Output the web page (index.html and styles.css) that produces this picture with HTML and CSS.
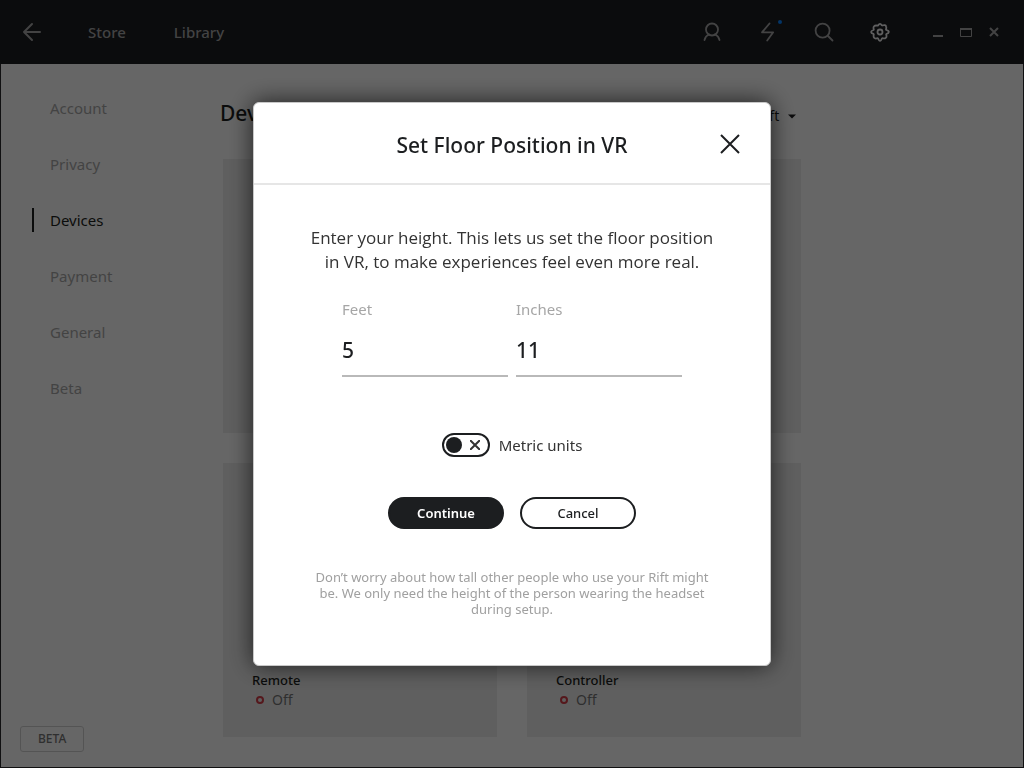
FILE: index.html
```html
<!DOCTYPE html>
<html lang="en">
<head>
<meta charset="utf-8">
<title>Devices</title>
<link rel="stylesheet" href="styles.css">
</head>
<body>
<div class="window">
  <header class="topbar">
    <button class="icon-button" aria-label="Back">
      <svg width="20" height="20" viewBox="0 0 20 20"><path d="M18 10H2M10 2L2 10l8 8"/></svg>
    </button>
    <nav class="topnav">
      <a href="#">Store</a>
      <a href="#">Library</a>
    </nav>
    <div class="tools">
      <button class="icon-button" aria-label="Profile">
        <svg width="20" height="20" viewBox="0 0 20 20"><circle cx="10" cy="7.500" r="6"/><path d="M2.500 18c.6-2.500 2-4.500 4.500-5.500M17.500 18c-.6-2.500-2-4.500-4.500-5.500"/></svg>
      </button>
      <button class="icon-button" aria-label="Activity">
        <svg width="20" height="20" viewBox="0 0 20 20"><path d="M11.500 1.500L4 10.300h11.200L9.200 18.500"/></svg>
        <span class="dot"></span>
      </button>
      <button class="icon-button" aria-label="Search">
        <svg width="20" height="20" viewBox="0 0 20 20"><circle cx="8.600" cy="8.600" r="7"/><path d="M14 14l4.500 4.500"/></svg>
      </button>
      <button class="icon-button active" aria-label="Settings">
        <svg width="20" height="20" viewBox="0 0 20 20"><path d="M8.200 3.300Q10 .3 11.800 3.300L12.200 3.500Q15.500 2.500 16 4.300Q16.600 5.200 16 7.600L16.400 8Q19.200 9 18.700 10Q19 11 16.400 12L16.200 12.400Q17 15 15.800 15.800Q14.800 16.800 12.400 16.200L11.900 16.500Q11 19 10 18.800Q9 19 8.100 16.500L7.600 16.200Q5 17 4.200 15.800Q3.200 14.900 3.800 12.400L3.500 11.900Q1 11 1.200 10Q1 9 3.500 8L3.800 7.500Q3 5 4.200 4.200Q5.200 3.100 7.700 3.700Z"/><circle cx="10" cy="10" r="2.500"/></svg>
      </button>
    </div>
    <div class="window-controls">
      <button aria-label="Minimize"><svg width="12" height="12" viewBox="0 0 12 12"><path d="M1 10h10"/></svg></button>
      <button aria-label="Maximize"><svg width="12" height="12" viewBox="0 0 12 12"><path d="M0 3h12"/><path d="M.5 2v8.500h11V2" stroke-width="1"/></svg></button>
      <button aria-label="Close window"><svg width="12" height="12" viewBox="0 0 12 12"><path d="M2 2l8 8M10 2l-8 8"/></svg></button>
    </div>
  </header>
  <div class="body">
    <aside class="sidebar">
      <nav>
        <a href="#">Account</a>
        <a href="#">Privacy</a>
        <a href="#" class="current" aria-current="page">Devices</a>
        <a href="#">Payment</a>
        <a href="#">General</a>
        <a href="#">Beta</a>
      </nav>
      <span class="beta">BETA</span>
    </aside>
    <main class="main">
      <div class="main-head">
        <h1>Devices</h1>
        <label class="picker">
          <select aria-label="Headset"><option>Rift</option></select>
          <svg width="8" height="5" viewBox="0 0 8 5"><path d="M0 .5h8L4 4.500z"/></svg>
        </label>
      </div>
      <div class="cards">
        <section class="card"></section>
        <section class="card"></section>
        <section class="card"><h2>Remote</h2><p><i></i>Off</p></section>
        <section class="card"><h2>Controller</h2><p><i></i>Off</p></section>
      </div>
    </main>
  </div>
</div>

<div class="overlay">
  <form class="modal" role="dialog" aria-labelledby="modal-title">
    <header class="modal-head">
      <h2 id="modal-title">Set Floor Position in VR</h2>
      <button type="button" class="close" aria-label="Close">
        <svg width="20" height="20" viewBox="0 0 20 20"><path d="M1 1l18 18M19 1L1 19"/></svg>
      </button>
    </header>
    <div class="modal-body">
      <p class="intro">Enter your height. This lets us set the floor position<br>in VR, to make experiences feel even more real.</p>
      <div class="fields">
        <div class="field"><label for="feet">Feet</label><input id="feet" type="text" inputmode="numeric" value="5"></div>
        <div class="field"><label for="inches">Inches</label><input id="inches" type="text" inputmode="numeric" value="11"></div>
      </div>
      <label class="metric">
        <span class="switch">
          <input type="checkbox" role="switch">
          <svg width="10" height="10" viewBox="0 0 10 10"><path d="M0 0l10 10M10 0L0 10"/></svg>
        </span>
        <span>Metric units</span>
      </label>
      <div class="actions">
        <button type="button" class="primary">Continue</button>
        <button type="button">Cancel</button>
      </div>
      <p class="note">Don’t worry about how tall other people who use your Rift might<br>be. We only need the height of the person wearing the headset<br>during setup.</p>
    </div>
  </form>
</div>
</body>
</html>
```
FILE: styles.css
```css
* {
  box-sizing: border-box;
}

body,
h1,
h2,
p {
  margin: 0;
}

body {
  font-family: "Noto Sans", "Open Sans", sans-serif;
  font-size: 15px;
  line-height: 20px;
  color: #1c1e20;
}

a {
  color: inherit;
  text-decoration: none;
}

button,
input,
select {
  margin: 0;
  padding: 0;
  border: 0;
  background: none;
  font: inherit;
  color: inherit;
}

svg {
  display: block;
  fill: none;
  stroke: currentColor;
  stroke-width: 2;
}

.window {
  display: flex;
  flex-direction: column;
  min-height: 100vh;
  background: #fff;
}

.topbar {
  display: flex;
  align-items: center;
  height: 64px;
  padding: 0 24px 0 22px;
  background: #1c1e22;
  color: #a8a8a8;
}

.icon-button {
  position: relative;
}

.icon-button.active {
  color: #f0f0f0;
}

.icon-button svg {
  stroke-linecap: round;
  stroke-linejoin: round;
}

.tools .icon-button svg {
  stroke-width: 1.8;
}

.topnav {
  display: flex;
  gap: 48px;
  margin-left: 46px;
  font-weight: 500;
}

.tools {
  display: flex;
  gap: 36px;
  margin-left: auto;
}

.dot {
  position: absolute;
  top: -2px;
  right: -4px;
  width: 4px;
  height: 4px;
  border-radius: 50%;
  background: #0a84ff;
}

.window-controls {
  display: flex;
  gap: 16px;
  margin-left: 42px;
}

.body {
  display: flex;
  flex: 1;
  border: 1px solid #2a2a2c;
  border-top: 0;
}

.sidebar {
  display: flex;
  flex-direction: column;
  justify-content: space-between;
  width: 219px;
  padding: 34px 19px 15px;
}

.sidebar nav {
  display: flex;
  flex-direction: column;
  gap: 36px;
  padding-left: 12px;
  color: #a9a9a9;
}

.sidebar a {
  display: block;
  padding-left: 18px;
}

.sidebar .current {
  margin: -2px 0;
  padding: 2px 0 2px 16px;
  border-left: 2px solid #1c1e20;
  color: #1c1e20;
}

.beta {
  align-self: flex-start;
  padding: 3px 17px;
  border: 1px solid #d2d2d2;
  border-radius: 3px;
  font-size: 12px;
  font-weight: 500;
  line-height: 18px;
  color: #777;
}

.main {
  width: 581px;
  padding: 35px 0 30px;
}

.main-head {
  display: flex;
  justify-content: space-between;
  height: 30px;
  padding-right: 5px;
}

.main-head h1 {
  font-size: 21px;
  font-weight: 500;
  line-height: 28px;
}

.picker {
  display: flex;
  align-items: center;
  gap: 8px;
  padding-top: 4px;
  font-size: 14px;
}

.picker select {
  appearance: none;
}

.picker svg {
  fill: currentColor;
  stroke: none;
}

.cards {
  display: grid;
  grid-template-columns: 1fr 1fr;
  grid-auto-rows: 274px;
  gap: 30px;
  margin: 30px 0 0 3px;
}

.card {
  display: flex;
  flex-direction: column;
  justify-content: flex-end;
  padding: 28px 29px 27px;
  background: #eee;
}

.card h2 {
  font-size: 13px;
  font-weight: 500;
  line-height: 20px;
}

.card p {
  display: flex;
  align-items: center;
  gap: 8px;
  padding-left: 4px;
  font-size: 14px;
  color: #777;
}

.card i {
  width: 8px;
  height: 8px;
  border: 2px solid #d43c48;
  border-radius: 50%;
}

.overlay {
  position: fixed;
  inset: 0;
  display: grid;
  place-items: center;
  background: rgba(0, 0, 0, 0.6);
}

.modal {
  width: 518px;
  max-width: 100%;
  border: 1px solid #c8c8c8;
  border-radius: 6px;
  background: #fff;
  box-shadow: 0 0 24px rgba(0, 0, 0, 0.7);
}

.modal-head {
  display: grid;
  grid-template-columns: 20px 1fr 20px;
  align-items: center;
  height: 82px;
  padding: 2px 30px 0;
  border-bottom: 2px solid #e6e6e6;
}

.modal-head h2 {
  grid-column: 2;
  padding-top: 2px;
  font-size: 21px;
  font-weight: 500;
  line-height: 28px;
  text-align: center;
}

.modal-body {
  display: flex;
  flex-direction: column;
  align-items: center;
  padding: 41px 40px 48px;
}

.intro {
  font-family: "Open Sans", "Noto Sans", sans-serif;
  font-size: 17px;
  line-height: 24px;
  text-align: center;
  color: #333;
}

.fields {
  display: grid;
  grid-template-columns: 1fr 1fr;
  gap: 8px;
  width: 340px;
  margin-top: 25px;
}

.field {
  display: flex;
  flex-direction: column;
}

.field label {
  font-size: 15px;
  color: #a6a6a6;
}

.field input {
  width: 100%;
  height: 58px;
  padding-top: 6px;
  border-bottom: 2px solid #b9b9b9;
  font-size: 21px;
  font-weight: 500;
}

.metric {
  display: flex;
  align-items: center;
  gap: 9px;
  margin-top: 56px;
  color: #333;
}

.switch {
  display: grid;
  align-items: center;
}

.switch > * {
  grid-area: 1 / 1;
}

.switch input {
  display: flex;
  align-items: center;
  appearance: none;
  width: 48px;
  height: 24px;
  padding: 0 2px;
  border: 2px solid #1c1e20;
  border-radius: 12px;
}

.switch input::before {
  content: "";
  width: 16px;
  height: 16px;
  border-radius: 50%;
  background: #1c1e20;
}

.switch svg {
  justify-self: end;
  margin-right: 10px;
}

.actions {
  display: flex;
  gap: 16px;
  margin-top: 40px;
}

.actions button {
  width: 116px;
  height: 32px;
  border: 2px solid #1c1e20;
  border-radius: 16px;
  font-size: 13px;
  font-weight: 500;
}

.actions .primary {
  background: #1c1e20;
  color: #fff;
  font-weight: 600;
}

.note {
  margin-top: 40px;
  font-size: 13px;
  line-height: 16px;
  text-align: center;
  color: #a0a0a0;
}
```
